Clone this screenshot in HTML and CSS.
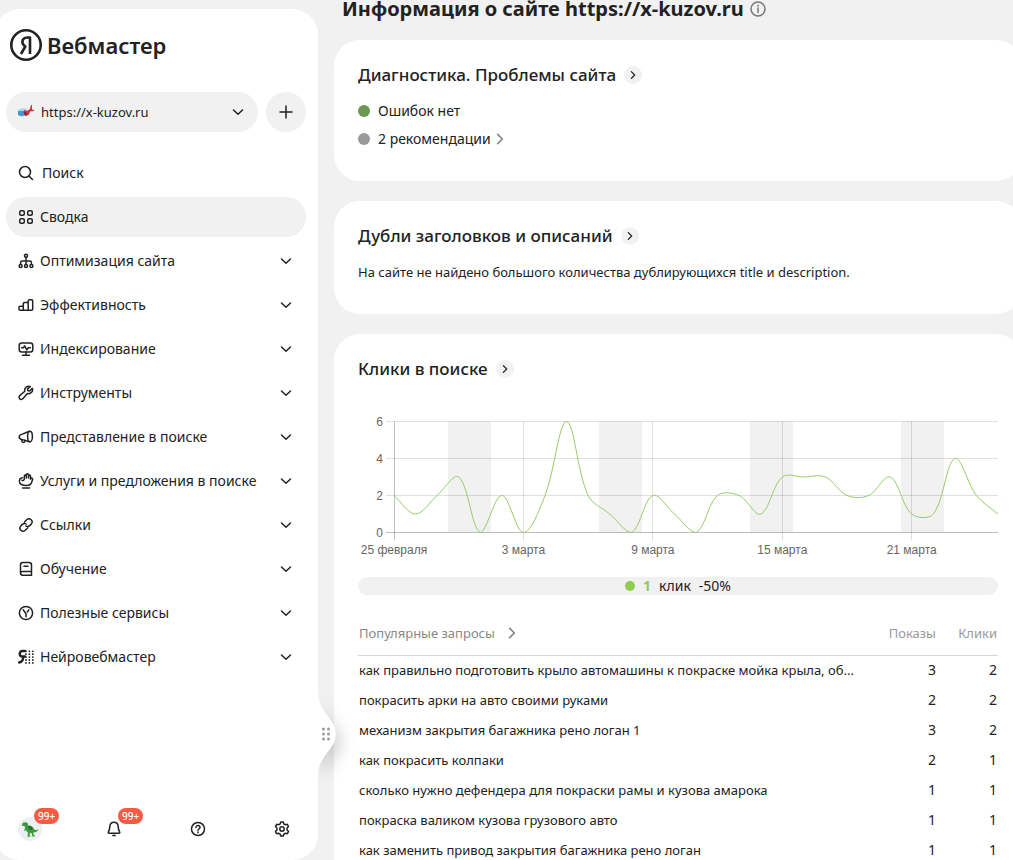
FILE: index.html
```html
<!DOCTYPE html>
<html lang="ru">
<head>
    <meta charset="utf-8">
    <meta name="viewport" content="width=device-width, initial-scale=1">
    <title>Вебмастер</title>
    <link rel="stylesheet" href="styles.css">
</head>
<body>
    <svg class="sprite" aria-hidden="true">
        <symbol id="down" viewBox="0 0 12 12"><path d="M1.500 4 6 8.300l4.500-4.300"/></symbol>
        <symbol id="right" viewBox="0 0 12 12"><path d="M4 2l4 4-4 4"/></symbol>
    </svg>
    <div class="page">
        <aside class="sidebar">
            <a class="logo" href="#">
                <svg class="logo-mark" viewBox="0 0 32 32" aria-hidden="true">
                    <circle cx="16" cy="16" r="14.700"/>
                    <path d="M20 25V8.500h-2.600c-3.300 0-5 1.700-5 4.300 0 2.200 1 3.400 2.900 4.700L11 25"/>
                </svg>
                <span class="logo-text">Вебмастер</span>
            </a>

            <div class="site-row">
                <div class="site">
                    <svg class="favicon" viewBox="0 0 16 16" aria-hidden="true">
                        <path fill="#a9d8f2" d="M0 6c3-2 6-2 9-1v6c-3 2-6 2-9 0z"/>
                        <path fill="#3b9bd8" d="M0 7h7v4c-3 1.500-5 1-7 0z"/>
                        <path fill="#d32f3a" d="M6 6l3 1 3-2 1-4 1 .3v4.200l2 .5v1l-4 .5-1 3-3 1.500L5.500 9z"/>
                        <path fill="#8c1f35" d="M6 8l3 1-1 3-2-2z"/>
                    </svg>
                    <select class="site-select" aria-label="Сайт">
                        <option>https://x-kuzov.ru</option>
                    </select>
                    <svg class="chevron"><use href="#down"/></svg>
                </div>
                <button class="add" type="button" aria-label="Добавить сайт">
                    <svg class="icon" viewBox="0 0 16 16"><path d="M8 2v12M2 8h12"/></svg>
                </button>
            </div>

            <nav class="menu">
                <a class="item search" href="#">
                    <svg class="icon" viewBox="0 0 16 16"><circle cx="7" cy="7" r="5.500"/><path d="M11 11l3.500 3.500"/></svg>
                    <span class="item-text">Поиск</span>
                </a>
                <a class="item active" href="#">
                    <svg class="icon" viewBox="0 0 16 16"><rect x="1.700" y="1.700" width="4.600" height="4.600" rx="1.500"/><rect x="9.700" y="1.700" width="4.600" height="4.600" rx="1.500"/><rect x="1.700" y="9.700" width="4.600" height="4.600" rx="1.500"/><rect x="9.700" y="9.700" width="4.600" height="4.600" rx="1.500"/></svg>
                    <span class="item-text">Сводка</span>
                </a>
                <button class="item" type="button">
                    <svg class="icon" viewBox="0 0 16 16"><circle cx="8" cy="2.700" r="1.500"/><circle cx="2.600" cy="13" r="1.500"/><circle cx="8" cy="13" r="1.500"/><circle cx="13.400" cy="13" r="1.500"/><path d="M8 4.500v6.500M2.600 11.200V9.500Q2.600 8 4 8h8q1.400 0 1.400 1.500v1.700"/></svg>
                    <span class="item-text">Оптимизация сайта</span>
                    <svg class="chevron"><use href="#down"/></svg>
                </button>
                <button class="item" type="button">
                    <svg class="icon" viewBox="0 0 16 16"><path d="M5.300 13.300H2.200q-1.200 0-1.200-1.200v-1.700q0-1.200 1.200-1.200h3.100zM5.300 13.300V6.800q0-1.200 1.200-1.200h3.700v7.700zM10.200 13.300V3.900q0-1.200 1.200-1.200h2.100q1.200 0 1.200 1.200v8.200q0 1.200-1.200 1.200z"/></svg>
                    <span class="item-text">Эффективность</span>
                    <svg class="chevron"><use href="#down"/></svg>
                </button>
                <button class="item" type="button">
                    <svg class="icon" viewBox="0 0 16 16"><rect x="1.200" y="2" width="13.600" height="9" rx="2.500"/><path d="M8 11v3M4.500 14.200h7M3.500 6.800h1.800l1.300-2 2.200 4 1.300-2h2.300"/></svg>
                    <span class="item-text">Индексирование</span>
                    <svg class="chevron"><use href="#down"/></svg>
                </button>
                <button class="item" type="button">
                    <svg class="icon" viewBox="0 0 16 16"><path d="M12.300 1.700c-3-1.200-6.200 1-5.500 4.500L2 10.400c-1.300 1.100-1.100 2.500-.3 3.300.8.900 2.300 1 3.300-.2l4.500-5c3.300.8 6-2.200 4.800-5.100L11.700 6l-1.900-.4-.3-1.700z"/></svg>
                    <span class="item-text">Инструменты</span>
                    <svg class="chevron"><use href="#down"/></svg>
                </button>
                <button class="item" type="button">
                    <svg class="icon" viewBox="0 0 16 16"><path d="M11.500 2.200L3.600 5.400C.4 6.300.4 9.900 3.600 10.400l7.900 2.400"/><ellipse cx="12" cy="7.500" rx="2.400" ry="5.300"/><path d="M3.800 10.500v1.300c0 2.200 3.200 2.200 3.200 0v-.5"/></svg>
                    <span class="item-text">Представление в поиске</span>
                    <svg class="chevron"><use href="#down"/></svg>
                </button>
                <button class="item" type="button">
                    <svg class="icon" viewBox="0 0 16 16"><path d="M6.300 6.300V3c0-1.300 2-1.300 2 0v2M8.300 4V1.800c0-1.300 2.200-1.300 2.200 0V5M10.500 4V3c0-1.300 2-1.300 2 0v3.300M12.500 5.800c.6-1.200 2.400-.7 2.100.6L13.600 9.500c-.7 2.200-2.600 3-5.200 3-4.100 0-6.800-1.300-7-4.100-.1-2.300 1.200-3.500 2.900-3.700M4 7.200c.8.700 1.800.3 2.300-.9M4.600 14.900h7"/></svg>
                    <span class="item-text">Услуги и предложения в поиске</span>
                    <svg class="chevron"><use href="#down"/></svg>
                </button>
                <button class="item" type="button">
                    <svg class="icon" viewBox="0 0 16 16"><path d="M6.500 5l2.200-2.200c3-2.900 7.300 1.200 4.500 4.300l-1.500 1.500c-1.200 1.100-2.700 1.200-3.900.4M9.500 11l-2.200 2.200c-3 2.900-7.300-1.200-4.500-4.300l1.500-1.500c1.200-1.100 2.700-1.200 3.900-.4"/></svg>
                    <span class="item-text">Ссылки</span>
                    <svg class="chevron"><use href="#down"/></svg>
                </button>
                <button class="item" type="button">
                    <svg class="icon" viewBox="0 0 16 16"><path d="M2.500 11.800V4q0-2.500 2.500-2.500h6q2.500 0 2.500 2.500v10.300H4.800q-2.300 0-2.300-2.500zM2.500 11.800q.2-1.400 2-1.400h9M6 5.300h4"/></svg>
                    <span class="item-text">Обучение</span>
                    <svg class="chevron"><use href="#down"/></svg>
                </button>
                <button class="item" type="button">
                    <svg class="icon" viewBox="0 0 16 16"><circle cx="8" cy="8" r="6.600"/><path d="M5.200 4.800l2.800 4v3M9.300 7l1.500-2.200"/></svg>
                    <span class="item-text">Полезные сервисы</span>
                    <svg class="chevron"><use href="#down"/></svg>
                </button>
                <button class="item" type="button">
                    <svg class="icon" viewBox="0 0 16 16"><path class="bold" d="M7 2H4.500C.8 2 .8 7.300 4.500 7.500H7M4.500 7.500C6 10 4 13.500 1 13.500"/><path class="dots" d="M8 2.300h8M8 5.200h8M8 8.100h8M8 11h8M8 13.900h8"/></svg>
                    <span class="item-text">Нейровебмастер</span>
                    <svg class="chevron"><use href="#down"/></svg>
                </button>
            </nav>

            <div class="tools">
                <button class="tool" type="button" aria-label="Профиль">
                    <span class="avatar">
                        <svg class="dino" viewBox="0 0 18 18" aria-hidden="true">
                            <path fill="#3d9b3f" d="M1 4.500C1.500 2 5 1.500 6.800 3.300l.4 2.200c2.500-.3 4.800 1 5.600 3.200 1 1.600 2.500 1.300 4.700.8-1 2.300-2.800 3-4.800 2.700l-.4 2 1.600 1.500-.3.800h-2.400l-.3-3-1.800-.8-.7 2.500 1 .8-.4.700H6.500l.4-4.200L4.500 10l-1.200 1-.5-.6L4 8.500l-.3-2.300-2.700-.4z"/>
                            <path fill="#1f6f2c" d="M7 6c2-.3 4 .6 5 2.500l-2 1.500-2.500-1zM3.500 3.500h1v.8h-1z"/>
                        </svg>
                    </span>
                    <span class="badge">99+</span>
                </button>
                <button class="tool" type="button" aria-label="Уведомления">
                    <svg class="icon" viewBox="0 0 16 16"><path d="M8 1.300c-2.600 0-4 1.800-4.200 4.300-.1 2.600-.6 3.900-1.400 5.200-.5.900-.1 1.500.8 1.500h9.600c.9 0 1.300-.6.800-1.500-.8-1.300-1.300-2.600-1.400-5.200C12 3.100 10.600 1.300 8 1.300z"/><path d="M6.800 14.500h2.400"/></svg>
                    <span class="badge">99+</span>
                </button>
                <button class="tool" type="button" aria-label="Помощь">
                    <svg class="icon" viewBox="0 0 16 16"><circle cx="8" cy="8" r="6.500"/><path d="M6 6.500c0-2.600 4-2.500 4 0C10 8 8 7.900 8 9.200M8 11v.8"/></svg>
                </button>
                <button class="tool" type="button" aria-label="Настройки">
                    <svg class="icon" viewBox="0 0 16 16"><circle cx="8" cy="8" r="2.200"/><path d="M6.800 1h2.400l.7 2 1.300.7 2.100-.4 1.200 2.100L13.100 7v2l1.400 1.600-1.200 2.100-2.100-.4-1.300.7-.7 2H6.800l-.7-2-1.300-.7-2.100.4-1.200-2.100L2.900 9V7L1.500 5.400l1.200-2.100 2.100.4L6.100 3z"/></svg>
                </button>
            </div>

            <button class="handle" type="button" aria-label="Изменить ширину меню">
                <svg class="handle-shape" viewBox="0 0 20 90" aria-hidden="true">
                    <path class="bump" d="M0 0c0 12 2 16 6 22l8 11c5 7 5 17 0 24l-8 11c-4 6-6 10-6 22z"/>
                    <g class="grip"><circle cx="5.500" cy="40" r="1.500"/><circle cx="10.500" cy="40" r="1.500"/><circle cx="5.500" cy="45" r="1.500"/><circle cx="10.500" cy="45" r="1.500"/><circle cx="5.500" cy="50" r="1.500"/><circle cx="10.500" cy="50" r="1.500"/></g>
                </svg>
            </button>
        </aside>

        <main class="content">
            <h1 class="title">
                Информация о сайте https://x-kuzov.ru
                <svg class="info" viewBox="0 0 16 16" aria-hidden="true"><circle cx="8" cy="8" r="7"/><path d="M8 7v4.500M8 4.300v.7"/></svg>
            </h1>

            <section class="card">
                <h2 class="heading">Диагностика. Проблемы сайта <a class="more" href="#" aria-label="Подробнее"><svg><use href="#right"/></svg></a></h2>
                <ul class="states">
                    <li class="state"><span class="dot ok"></span>Ошибок нет</li>
                    <li class="state"><span class="dot"></span><a class="link" href="#">2 рекомендации <svg class="arrow"><use href="#right"/></svg></a></li>
                </ul>
            </section>

            <section class="card">
                <h2 class="heading">Дубли заголовков и описаний <a class="more" href="#" aria-label="Подробнее"><svg><use href="#right"/></svg></a></h2>
                <p class="note">На сайте не найдено большого количества дублирующихся title и description.</p>
            </section>

            <section class="card">
                <h2 class="heading">Клики в поиске <a class="more" href="#" aria-label="Подробнее"><svg><use href="#right"/></svg></a></h2>
                <svg class="chart" id="chart" viewBox="0 0 640 150" role="img" aria-label="Клики в поиске"></svg>
                <div class="legend"><span class="legend-dot"></span><b class="legend-value">1</b><span>клик</span><span>-50%</span></div>
                <table class="queries">
                    <thead>
                        <tr>
                            <th><a class="link" href="#">Популярные запросы <svg class="arrow"><use href="#right"/></svg></a></th>
                            <th class="num shows">Показы</th>
                            <th class="num clicks">Клики</th>
                        </tr>
                    </thead>
                    <tbody>
                        <tr><td class="query">как правильно подготовить крыло автомашины к покраске мойка крыла, об...</td><td class="num">3</td><td class="num">2</td></tr>
                        <tr><td class="query">покрасить арки на авто своими руками</td><td class="num">2</td><td class="num">2</td></tr>
                        <tr><td class="query">механизм закрытия багажника рено логан 1</td><td class="num">3</td><td class="num">2</td></tr>
                        <tr><td class="query">как покрасить колпаки</td><td class="num">2</td><td class="num">1</td></tr>
                        <tr><td class="query">сколько нужно дефендера для покраски рамы и кузова амарока</td><td class="num">1</td><td class="num">1</td></tr>
                        <tr><td class="query">покраска валиком кузова грузового авто</td><td class="num">1</td><td class="num">1</td></tr>
                        <tr><td class="query">как заменить привод закрытия багажника рено логан</td><td class="num">1</td><td class="num">1</td></tr>
                    </tbody>
                </table>
            </section>
        </main>
    </div>
    <script src="chart.js"></script>
</body>
</html>
```

FILE: styles.css
```css
* {
    box-sizing: border-box;
}
body {
    margin: 0;
    height: 100vh;
    overflow: hidden;
    font-family: "Noto Sans", sans-serif;
    font-size: 14px;
    line-height: 20px;
    background: #f1f1f1;
    color: #222;
}
button, select {
    border: 0;
    background: none;
    font: inherit;
    color: inherit;
    padding: 0;
}
a {
    color: inherit;
    text-decoration: none;
}
svg {
    fill: none;
    stroke: #222;
    stroke-width: 1.5;
    stroke-linecap: round;
    stroke-linejoin: round;
    flex: none;
}
.sprite {
    display: none;
}
.page {
    display: flex;
    gap: 16px;
    height: 100%;
}

/* sidebar */
.sidebar {
    position: relative;
    display: flex;
    flex-direction: column;
    flex: none;
    width: 324px;
    margin: 9px 0 0 -6px;
    padding: 20px 12px 12px;
    border-radius: 26px;
    background: #fff;
}
.logo {
    display: flex;
    align-items: center;
    gap: 5px;
    height: 32px;
    padding-left: 4px;
}
.logo-mark {
    width: 32px;
    height: 32px;
    stroke-width: 2.6;
    stroke-linecap: butt;
}
.logo-text {
    font-size: 22px;
    font-weight: 600;
}
.site-row {
    display: flex;
    gap: 8px;
    margin: 31px 0 21px;
}
.site {
    display: flex;
    align-items: center;
    flex: 1;
    gap: 7px;
    height: 40px;
    padding: 0 14px 0 12px;
    border-radius: 20px;
    background: #f1f1f1;
}
.site-select {
    flex: 1;
    appearance: none;
    font-size: 13px;
}
.favicon {
    width: 16px;
    height: 16px;
    stroke: none;
}
.chevron {
    width: 12px;
    height: 12px;
}
.add {
    display: flex;
    align-items: center;
    justify-content: center;
    width: 40px;
    height: 40px;
    border-radius: 20px;
    background: #f1f1f1;
}
.icon {
    width: 16px;
    height: 16px;
}
.menu {
    display: flex;
    flex-direction: column;
    gap: 4px;
}
.item {
    display: flex;
    align-items: center;
    gap: 6px;
    height: 40px;
    padding: 0 14px 0 12px;
    border-radius: 20px;
    text-align: left;
}
.item.search {
    gap: 8px;
}
.item.active {
    background: #f1f1f1;
}
.item-text {
    flex: 1;
}
.bold {
    stroke-width: 2.4;
}
.dots {
    stroke-width: 1.8;
    stroke-dasharray: 0 3.4;
}

/* bottom icons */
.tools {
    display: flex;
    justify-content: space-between;
    margin-top: auto;
    padding: 0 12px;
}
.tool {
    position: relative;
    display: flex;
    align-items: center;
    justify-content: center;
    width: 24px;
    height: 24px;
    margin-bottom: 7px;
}
.avatar {
    display: flex;
    align-items: center;
    justify-content: center;
    width: 24px;
    height: 24px;
    border-radius: 12px;
    background: #eceff1;
}
.dino {
    width: 18px;
    height: 18px;
    stroke: none;
}
.badge {
    position: absolute;
    left: 16px;
    top: -9px;
    padding: 0 4px;
    border-radius: 8px;
    background: #fa5a44;
    color: #fff;
    font-size: 10px;
    font-weight: 500;
    line-height: 16px;
}

/* drag handle over the edge of the sidebar */
.handle {
    position: absolute;
    left: 100%;
    top: 680px;
    width: 20px;
    height: 90px;
    cursor: col-resize;
}
.handle-shape {
    display: block;
    width: 20px;
    height: 90px;
    overflow: visible;
    filter: drop-shadow(4px 8px 8px rgba(0, 0, 0, 0.2));
    clip-path: inset(-20px -40px -40px 0);
}
.bump {
    fill: #fff;
    stroke: none;
}
.grip {
    fill: #999;
    stroke: none;
}

/* content */
.content {
    display: flex;
    flex-direction: column;
    flex: 1;
    gap: 20px;
    min-width: 0;
    margin-right: -9px;
}
.title {
    display: flex;
    align-items: center;
    gap: 6px;
    height: 20px;
    margin: 0;
    padding: 0 8px 2px;
    font-size: 20px;
    font-weight: 700;
    line-height: 18px;
    white-space: nowrap;
}
.info {
    width: 16px;
    height: 16px;
    stroke: #777;
}
.card {
    flex: none;
    padding: 22px 24px 32px;
    border-radius: 26px;
    background: #fff;
}
.heading {
    display: flex;
    align-items: center;
    gap: 8px;
    margin: 0;
    font-size: 17px;
    font-weight: 500;
    line-height: 26px;
}
.more {
    display: flex;
    align-items: center;
    justify-content: center;
    width: 18px;
    height: 18px;
    border-radius: 9px;
    background: #f1f1f1;
}
.more svg {
    width: 10px;
    height: 10px;
}
.states {
    display: grid;
    gap: 8px;
    margin: 13px 0 0;
    padding: 0;
    list-style: none;
}
.state {
    display: flex;
    align-items: center;
    gap: 8px;
}
.dot {
    width: 12px;
    height: 12px;
    border-radius: 6px;
    background: #999;
}
.dot.ok {
    background: #6a9850;
}
.link {
    display: inline-flex;
    align-items: center;
    gap: 2px;
}
.arrow {
    width: 14px;
    height: 14px;
    stroke: #888;
}
.note {
    margin: 13px 0 0;
    font-size: 13px;
}

/* clicks chart */
.chart {
    display: block;
    width: 100%;
    margin-top: 28px;
    stroke: none;
}
.chart .axis-label {
    fill: #666;
    font-family: "Liberation Sans", Arial, sans-serif;
    font-size: 12px;
}
.chart .weekend {
    fill: #f1f1f1;
}
.chart .grid {
    stroke: rgba(0, 0, 0, 0.12);
    stroke-width: 1;
    stroke-linecap: butt;
}
.chart .axis {
    stroke: rgba(0, 0, 0, 0.25);
    stroke-width: 1;
    stroke-linecap: butt;
}
.chart .line {
    stroke: #97cc64;
    stroke-width: 1;
}
.legend {
    display: flex;
    align-items: center;
    justify-content: center;
    gap: 8px;
    height: 18px;
    margin-top: 17px;
    border-radius: 9px;
    background: #f1f1f1;
}
.legend-dot {
    width: 10px;
    height: 10px;
    border-radius: 5px;
    background: #8fcc52;
}
.legend-value {
    color: #8fcc52;
}
.queries {
    width: 100%;
    margin-top: 16px;
    border-collapse: collapse;
}
.queries th {
    height: 44px;
    padding: 0 1px;
    border-bottom: 1px solid #d5d5d5;
    color: #888;
    font-size: 13px;
    font-weight: 400;
    text-align: left;
}
.queries td {
    height: 30px;
    padding: 0 1px;
}
.queries .query {
    font-size: 13px;
    white-space: nowrap;
}
.queries .link {
    gap: 10px;
}
.queries .num {
    text-align: right;
}
.queries th.num {
    color: #999;
}
.queries .shows {
    width: 60px;
}
.queries .clicks {
    width: 61px;
}
```

FILE: chart.js
```js
const clicks = [2, 1, 2, 3, 0, 2, 0, 2, 6, 2, 1, 0, 2, 1, 0, 2, 2, 1, 3, 3, 3, 2, 2, 3, 1, 1, 4, 2, 1]
const labels = ['25 февраля', '3 марта', '9 марта', '15 марта', '21 марта']
const left = 36, right = 640, top_y = 11.5, bottom = 122.5
const step = (right - left) / (clicks.length - 1)
const px = i => left + i * step
const py = v => bottom - v * (bottom - top_y) / 6
const crisp = x => Math.floor(x) + 0.5

function weekend(i) {
    return `<rect class="weekend" x="${px(i - 0.5)}" y="${top_y}" width="${step * 2}" height="${bottom - top_y}"/>`
}

// smooth line, control points stay inside the plot area
function spline(values, tension) {
    const pts = values.map((v, i) => ({x: px(i), y: py(v)}))
    const clamp = y => Math.min(bottom, Math.max(top_y, y))
    const ctrl = pts.map((p, i) => {
        const a = pts[i - 1] || p
        const b = pts[i + 1] || p
        const d1 = Math.hypot(p.x - a.x, p.y - a.y)
        const d2 = Math.hypot(b.x - p.x, b.y - p.y)
        const f1 = tension * d1 / (d1 + d2)
        const f2 = tension * d2 / (d1 + d2)
        return {
            x1: p.x - f1 * (b.x - a.x), y1: clamp(p.y - f1 * (b.y - a.y)),
            x2: p.x + f2 * (b.x - a.x), y2: clamp(p.y + f2 * (b.y - a.y))
        }
    })
    let d = `M${pts[0].x} ${pts[0].y}`
    for (let i = 1; i < pts.length; i++) {
        const c = ctrl[i - 1], n = ctrl[i]
        d += `C${c.x2} ${c.y2} ${n.x1} ${n.y1} ${pts[i].x} ${pts[i].y}`
    }
    return d
}

let out = [3, 10, 17, 24].map(weekend).join('')
for (let v = 0; v <= 6; v += 2) {
    const y = crisp(py(v))
    out += `<path class="${v ? 'grid' : 'axis'}" d="M${left - 8} ${y}H${right}"/>`
    out += `<text class="axis-label" x="25" y="${y + 4}" text-anchor="end">${v}</text>`
}
labels.forEach((text, i) => {
    const x = crisp(px(i * 6))
    out += `<path class="${i ? 'grid' : 'axis'}" d="M${x} ${top_y}V${bottom + 8}"/>`
    out += `<text class="axis-label" x="${px(i * 6)}" y="144" text-anchor="middle">${text}</text>`
})
out += `<path class="line" d="${spline(clicks, 0.35)}"/>`
document.getElementById('chart').innerHTML = out
```
